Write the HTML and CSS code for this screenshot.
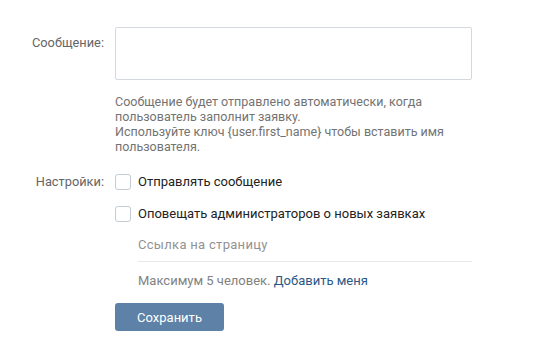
FILE: index.html
```html
<!DOCTYPE html>
<html lang="ru">
<head>
<meta charset="utf-8">
<title>Настройки заявки</title>
<link rel="stylesheet" href="styles.css">
</head>
<body>
<form class="form">
  <div class="label label-msg">Сообщение:</div>
  <div class="field">
    <textarea class="textarea"></textarea>
    <div class="hint">Сообщение будет отправлено автоматически, когда пользователь заполнит заявку.<br>Используйте ключ {user.first_name} чтобы вставить имя пользователя.</div>
  </div>

  <div class="label label-settings">Настройки:</div>
  <div class="field">
    <label class="check"><span class="box"></span><span>Отправлять сообщение</span></label>
    <label class="check check-2"><span class="box"></span><span>Оповещать администраторов о новых заявках</span></label>
    <input class="link-input" type="text" placeholder="Ссылка на страницу">
    <div class="limit">Максимум 5 человек. <a class="link" href="#">Добавить меня</a></div>
    <button class="btn" type="button">Сохранить</button>
  </div>
</form>
</body>
</html>
```

FILE: styles.css
```css
html, body {
  margin: 0;
  padding: 0;
  background: #fff;
}
body {
  font-family: Roboto, "Open Sans", Arial, sans-serif;
  font-size: 13px;
  color: #000;
}
.form {
  display: grid;
  grid-template-columns: 104px 357px;
  column-gap: 11px;
  row-gap: 18px;
  padding-top: 27px;
}
.label {
  text-align: right;
  color: #656565;
  font-size: 12.8px;
}
.label-msg {
  padding-top: 8px;
  line-height: 16px;
}
.label-settings {
  line-height: 20px;
}
.field {
  display: flex;
  flex-direction: column;
}
.textarea {
  display: block;
  box-sizing: border-box;
  width: 357px;
  height: 53px;
  border: 1px solid #d3d9de;
  border-radius: 2px;
  resize: none;
  margin: 0;
  font-family: inherit;
  font-size: 13px;
  outline: none;
}
.hint {
  margin-top: 14px;
  font-size: 12.5px;
  line-height: 15px;
  color: #737373;
}
.check {
  display: flex;
  align-items: center;
  gap: 7px;
  height: 20px;
  line-height: 20px;
  color: #222;
}
.check-2 {
  margin-top: 12px;
}
.box {
  box-sizing: border-box;
  width: 16px;
  height: 16px;
  border: 1px solid #c3ccd6;
  border-radius: 3px;
  background: #fff;
  flex: none;
}
.link-input {
  box-sizing: border-box;
  margin: 8px 0 0 23px;
  width: 334px;
  height: 30px;
  padding: 2px 0 6px 0;
  border: none;
  border-bottom: 1px solid #e7e8ec;
  font-family: inherit;
  font-size: 13px;
  color: #000;
  outline: none;
  background: transparent;
}
.link-input::placeholder {
  color: #929292;
  letter-spacing: 0.3px;
}
.limit {
  margin: 11px 0 0 23px;
  line-height: 16px;
  color: #828282;
}
.link {
  color: #2a5885;
  text-decoration: none;
}
.btn {
  margin-top: 14px;
  width: 109px;
  height: 28px;
  border: none;
  border-radius: 3px;
  background: #5e81a8;
  color: #fff;
  font-family: inherit;
  font-size: 13px;
  padding: 0;
  text-align: center;
}
```
